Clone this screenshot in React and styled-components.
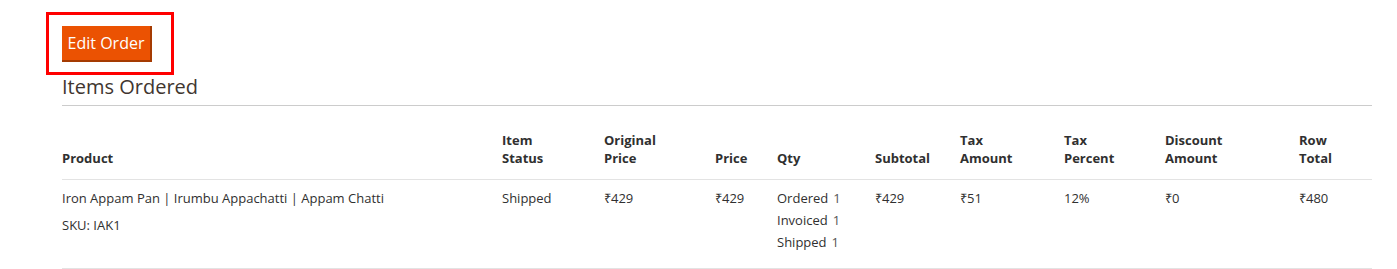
import React from "react";
import styled, { createGlobalStyle } from "styled-components";

const Global = createGlobalStyle`
  html, body { margin: 0; padding: 0; background: #fff; }
  body { font-family: "Open Sans", "Liberation Sans", sans-serif; color: #303030; }
`;

const Page = styled.div`
  padding: 12px 25px 0 62px;
`;

const Highlight = styled.div`
  display: inline-block;
  margin-left: -16px;
  border: 3px solid #f00;
  padding: 11px 19px 10px 13px;
`;

const PrimaryButton = styled.button`
  display: block;
  box-sizing: border-box;
  width: 90px;
  height: 36px;
  padding: 0 0 1px;
  background: #eb5202;
  color: #fff;
  font-family: "Open Sans", "Liberation Sans", sans-serif;
  font-size: 16px;
  line-height: 20px;
  border: 0;
  border-right: 2px solid #a53b02;
  border-bottom: 2px solid #a53b02;
  cursor: pointer;
`;

const SectionTitle = styled.h2`
  margin: 0;
  padding-bottom: 6px;
  border-bottom: 1px solid #cccccc;
  font-size: 20px;
  font-weight: 400;
  line-height: 24px;
  color: #41362f;
`;

const Table = styled.table`
  width: 100%;
  border-collapse: collapse;
  table-layout: fixed;
  font-size: 13px;
`;

const HeadCell = styled.th`
  text-align: left;
  vertical-align: bottom;
  font-weight: 700;
  line-height: 18px;
  color: #303030;
  padding: 25px 10px 12px 0;
  border-bottom: 1px solid #e3e3e3;
`;

const Cell = styled.td`
  vertical-align: top;
  line-height: 22px;
  padding: 7px 10px 15px 0;
  border-bottom: 1px solid #e3e3e3;
`;

const Sku = styled.div`
  margin-top: 5px;
`;

const QtyList = styled.div`
  display: flex;
  flex-direction: column;
`;

const QtyLine = styled.div`
  white-space: nowrap;
`;

const QtyValue = styled.span`
  margin-left: 5px;
  color: #555555;
`;

const columns = [
  { label: ["Product"], width: 440 },
  { label: ["Item", "Status"], width: 102 },
  { label: ["Original", "Price"], width: 111 },
  { label: ["Price"], width: 62 },
  { label: ["Qty"], width: 98 },
  { label: ["Subtotal"], width: 85 },
  { label: ["Tax", "Amount"], width: 104 },
  { label: ["Tax", "Percent"], width: 101 },
  { label: ["Discount", "Amount"], width: 134 },
  { label: ["Row", "Total"], width: 73 },
];

export default function App() {
  return (
    <>
      <Global />
      <Page>
        <Highlight>
          <PrimaryButton>Edit Order</PrimaryButton>
        </Highlight>
        <SectionTitle>Items Ordered</SectionTitle>
        <Table>
          <colgroup>
            {columns.map((c, i) => (
              <col key={i} style={{ width: c.width }} />
            ))}
          </colgroup>
          <thead>
            <tr>
              {columns.map((c, i) => (
                <HeadCell key={i}>
                  {c.label.map((l, j) => (
                    <React.Fragment key={j}>
                      {j > 0 && <br />}
                      {l}
                    </React.Fragment>
                  ))}
                </HeadCell>
              ))}
            </tr>
          </thead>
          <tbody>
            <tr>
              <Cell>
                <div>Iron Appam Pan | Irumbu Appachatti | Appam Chatti</div>
                <Sku>SKU: IAK1</Sku>
              </Cell>
              <Cell>Shipped</Cell>
              <Cell>₹429</Cell>
              <Cell>₹429</Cell>
              <Cell>
                <QtyList>
                  <QtyLine>Ordered<QtyValue>1</QtyValue></QtyLine>
                  <QtyLine>Invoiced<QtyValue>1</QtyValue></QtyLine>
                  <QtyLine>Shipped<QtyValue>1</QtyValue></QtyLine>
                </QtyList>
              </Cell>
              <Cell>₹429</Cell>
              <Cell>₹51</Cell>
              <Cell>12%</Cell>
              <Cell>₹0</Cell>
              <Cell>₹480</Cell>
            </tr>
          </tbody>
        </Table>
      </Page>
    </>
  );
}
